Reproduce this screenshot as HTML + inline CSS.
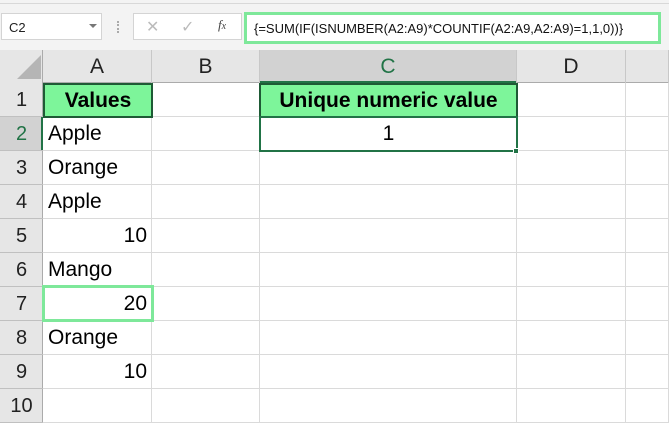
<!DOCTYPE html><html><head><style>
body{margin:0;width:669px;height:422px;overflow:hidden;background:#fff;font-family:"Liberation Sans",Calibri,sans-serif;position:relative}
.a{position:absolute;box-sizing:border-box}
</style></head><body>
<div class="a" style="left:0;top:0;width:669px;height:50px;background:#f3f3f3"></div>
<div class="a" style="left:0;top:3px;width:669px;height:1px;background:#d8d8d8"></div>
<div class="a" style="left:1px;top:13px;width:101px;height:27px;background:#fff;border:1px solid #d4d4d4;font-size:13px;padding:6px 7px;color:#222">C2</div>
<div class="a" style="left:89px;top:24px;width:0;height:0;border-left:4px solid transparent;border-right:4px solid transparent;border-top:4px solid #777"></div>
<div class="a" style="left:117px;top:21px;width:2px;height:12px;border-left:2px dotted #aaa"></div>
<div class="a" style="left:133px;top:13px;width:109px;height:27px;background:#fff;border:1px solid #d4d4d4"></div>
<div class="a" style="left:146px;top:17px;font-size:16px;color:#bbb">✕</div>
<div class="a" style="left:181px;top:17px;font-size:16px;color:#bbb">✓</div>
<div class="a" style="left:218px;top:17px;font-size:13px;color:#444;font-style:italic;font-family:'Liberation Serif',serif">f<span style="font-size:10px">x</span></div>
<div class="a" style="left:244px;top:12px;width:417px;height:32px;background:#fff;border:3px solid #7ee89a;font-size:13px;padding:6px 7px;color:#111">{=SUM(IF(ISNUMBER(A2:A9)*COUNTIF(A2:A9,A2:A9)=1,1,0))}</div>
<div class="a" style="left:0;top:50px;width:669px;height:33px;background:#e6e6e6;border-bottom:1px solid #ababab"></div>
<div class="a" style="left:0;top:50px;width:43px;height:372px;background:#e6e6e6;border-right:1px solid #ababab"></div>
<svg class="a" style="left:15px;top:55px" width="26" height="26"><polygon points="26,0 26,24 2,24" fill="#b5b5b5"/></svg>
<div class="a" style="left:260px;top:50px;width:257px;height:33px;background:#d2d2d2;border-bottom:2px solid #217346"></div>
<div class="a" style="left:0;top:117px;width:43px;height:34px;background:#d2d2d2;border-right:2px solid #217346"></div>
<div id="g"></div>
<script>
var cols=[43,152,260,517,626,669],names=["A","B","C","D",""];
var h='';
for(var i=0;i<5;i++){h+='<div class="a" style="left:'+cols[i]+'px;top:50px;width:'+(cols[i+1]-cols[i])+'px;height:33px;text-align:center;font-size:21px;line-height:34px;color:'+(i==2?'#217346':'#222')+';border-right:1px solid #c8c8c8">'+names[i]+'</div>';
h+='<div class="a" style="left:'+(cols[i+1]-1)+'px;top:83px;width:1px;height:339px;background:#dadada"></div>';}
for(var r=1;r<=10;r++){var y=83+(r-1)*34;
h+='<div class="a" style="left:0;top:'+y+'px;width:43px;height:34px;text-align:center;font-size:20px;line-height:34px;color:'+(r==2?'#217346':'#222')+'">'+r+'</div>';
h+='<div class="a" style="left:43px;top:'+(y+33)+'px;width:626px;height:1px;background:#dadada"></div>';
h+='<div class="a" style="left:0;top:'+(y+33)+'px;width:43px;height:1px;background:#c0c0c0"></div>';}
document.getElementById('g').innerHTML=h;
</script>
<div class="a" style="left:43px;top:83px;width:110px;height:35px;background:#7df59a;border:2px solid #1e5a35;text-align:center;font-weight:bold;font-size:21px;line-height:31px">Values</div>
<div class="a" style="left:259px;top:83px;width:259px;height:35px;background:#7df59a;border:2px solid #1e5a35;text-align:center;font-weight:bold;font-size:21px;line-height:31px">Unique numeric value</div>
<div class="a" style="left:259px;top:116px;width:259px;height:36px;border:2px solid #217346;text-align:center;font-size:21px;line-height:32px">1</div>
<div class="a" style="left:513px;top:148px;width:6px;height:6px;background:#217346;border:1px solid #fff"></div>
<div class="a" style="left:42px;top:285px;width:112px;height:37px;border:3px solid #7ee89a"></div>
<div class="a" style="left:48px;top:117px;font-size:21px;line-height:34px">Apple</div>
<div class="a" style="left:48px;top:151px;font-size:21px;line-height:34px">Orange</div>
<div class="a" style="left:48px;top:185px;font-size:21px;line-height:34px">Apple</div>
<div class="a" style="left:48px;top:219px;width:99px;text-align:right;font-size:21px;line-height:34px">10</div>
<div class="a" style="left:48px;top:253px;font-size:21px;line-height:34px">Mango</div>
<div class="a" style="left:48px;top:287px;width:99px;text-align:right;font-size:21px;line-height:34px">20</div>
<div class="a" style="left:48px;top:321px;font-size:21px;line-height:34px">Orange</div>
<div class="a" style="left:48px;top:355px;width:99px;text-align:right;font-size:21px;line-height:34px">10</div>
</body></html>
